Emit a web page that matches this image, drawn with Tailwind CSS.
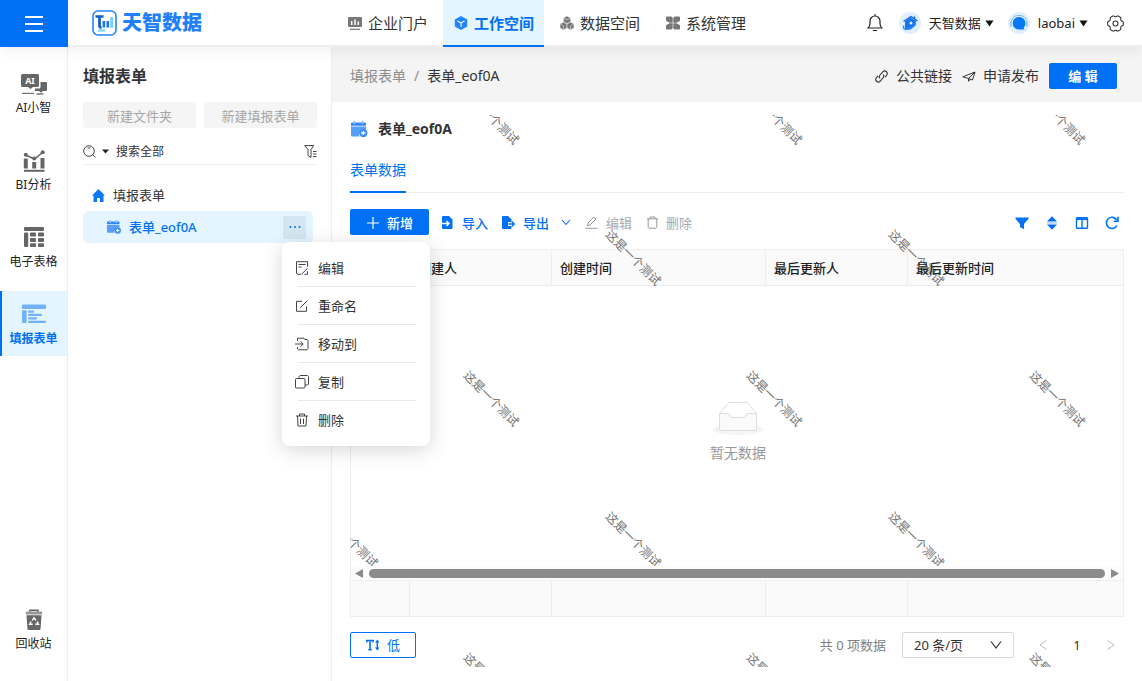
<!DOCTYPE html>
<html lang="zh-CN">

<head>
    <meta charset="UTF-8" />
    <meta name="viewport" content="width=device-width, initial-scale=1.0" />
    <title>天智数据 - 填报表单</title>
    <script src="https://cdn.jsdelivr.net/npm/@tailwindcss/browser@4"></script>
</head>

<body class="h-screen flex flex-col overflow-hidden bg-white text-[#333] text-[13px] leading-5 font-['Noto_Sans','Noto_Sans_CJK_SC',sans-serif]">

    <!-- 顶部导航 -->
    <header class="relative z-10 h-[47px] shrink-0 flex items-start bg-white border-b-2 border-[#eee] shadow-[0_5px_10px_rgba(0,0,0,0.05)]">
        <button type="button" aria-label="菜单" class="w-[68px] h-[47px] shrink-0 bg-[#0070f5] flex items-center justify-center">
            <svg class="w-[18px] h-4" viewBox="0 0 18 16" stroke="#fff" stroke-width="1.8"><path d="M0 1h18M0 8h18M0 15h18" /></svg>
        </button>
        <a href="#" class="w-[269px] h-[45px] pl-6 flex items-center gap-[5px]">
            <svg class="w-[25px] h-[26px]" viewBox="0 0 25 26" fill="none">
                <rect x="1" y="1" width="23" height="24" rx="5" stroke="#2684f8" stroke-width="1.6" />
                <path d="M3.500 6.500h8" stroke="#1764c8" stroke-width="2.600" />
                <path d="M7.500 6v9.500a2 2 0 0 0 2 2" stroke="#1764c8" stroke-width="2.800" />
                <path d="M11.900 11v6.500M15.800 11v6.500" stroke="#1a78ef" stroke-width="2.600" />
                <path d="M19.700 7v10.800" stroke="#6fd0fb" stroke-width="2.800" />
                <path d="M6 20.500h7" stroke="#6fd9f5" stroke-width="2.200" />
            </svg>
            <span class="text-xl leading-6 font-black text-[#1f80fa]">天智数据</span>
        </a>
        <nav class="flex gap-[5px] text-[15px] whitespace-nowrap">
            <a href="#" class="w-[101px] h-[45px] pl-[11px] flex items-center gap-1.5">
                <svg class="w-3.5 h-3.5" viewBox="0 0 14 14"><path d="M1 1h12a1 1 0 0 1 1 1v8a1 1 0 0 1-1 1H1a1 1 0 0 1-1-1V2a1 1 0 0 1 1-1z" fill="#777" /><path d="M3.700 5v4M7 3.500V9M10.300 5.500V9" stroke="#fff" stroke-width="1.500" /><path d="M2 13.300h10" stroke="#777" stroke-width="1.200" /></svg>
                企业门户
            </a>
            <a href="#" class="w-[101px] h-[47px] pl-[11px] flex items-center gap-1.5 bg-[#e4f5ff] text-[#0070f5] font-bold border-b-2 border-[#0070f5]">
                <svg class="w-3.5 h-3.5" viewBox="0 0 14 14"><path d="M7 0l6.200 3.400v7.200L7 14 .8 10.600V3.400z" fill="#2286f8" /><path d="M3.500 5L7 6.900 10.500 5M7 6.900v4" stroke="#fff" stroke-width="1.100" fill="none" /></svg>
                工作空间
            </a>
            <a href="#" class="w-[101px] h-[45px] pl-[11px] flex items-center gap-1.5">
                <svg class="w-3.5 h-3.5" viewBox="0 0 14 14" fill="#777" stroke="#fff" stroke-width=".5"><path d="M7 0l3.600 1.900v3.900L7 7.700 3.400 5.800V1.900z" /><path d="M3.500 6.100l3.500 1.900v3.900l-3.500 2L0 11.900V8z" /><path d="M10.500 6.100L14 8v3.900l-3.500 2L7 11.900V8z" /><path d="M3.600 2L7 3.800l3.500-1.700M3.500 9.900v3.700M.3 8.200l3.200 1.700M10.500 9.900v3.700M10.500 9.900l3.200-1.700" fill="none" /></svg>
                数据空间
            </a>
            <a href="#" class="w-[101px] h-[45px] pl-[11px] flex items-center gap-1.5">
                <svg class="w-3.5 h-3.5" viewBox="0 0 14 14" fill="#777"><path d="M1 .5h4A1.700 1.700 0 0 1 6.700 2.200v4.500H3.500L0 4.700V1.500a1 1 0 0 1 1-1z" /><path d="M13 .5H9A1.700 1.700 0 0 0 7.300 2.200v4.500h3.200L14 4.700V1.500a1 1 0 0 0-1-1z" /><path d="M1 13.500h4a1.700 1.700 0 0 0 1.700-1.700V7.300H3.500L0 9.300v3.200a1 1 0 0 0 1 1z" /><path d="M13 13.500H9a1.700 1.700 0 0 1-1.700-1.700V7.300h3.200l3.500 2v3.200a1 1 0 0 1-1 1z" /></svg>
                系统管理
            </a>
        </nav>
        <div class="ml-auto h-[46px] pr-[18px] flex items-center text-[#222] whitespace-nowrap">
            <button type="button" aria-label="通知" class="mr-4">
                <svg class="w-4 h-[18px]" viewBox="0 0 16 18" fill="none" stroke="#222" stroke-width="1.200"><path d="M8 .5v1.500M1 14h14c-1.500-1.300-2-2.500-2-4.500V7a5 5 0 0 0-10 0v2.500C3 11.500 2.500 12.700 1 14zM6.300 16.500h3.400" stroke-linejoin="round" stroke-linecap="round" /></svg>
            </button>
            <button type="button" class="flex items-center">
                <svg class="w-[22px] h-[22px] mr-2" viewBox="0 0 22 22"><circle cx="11" cy="11" r="11" fill="#e0efff" /><path d="M6 9.500l5.500-4 5.500 3.500-.5 4.500-5 4-5.500-.5z" fill="#1474f0" /><path d="M4.500 9.500l7.500-5 6.500 4.500M15.500 4.500V7" stroke="#0a62da" stroke-width="1.400" fill="none" /><circle cx="12" cy="11" r="1.500" fill="#e0efff" /><path d="M5 13.500c-2 3.500 1.500 4.800 6 3 3-1.200 4.500-3 5.500-4.500" stroke="#2e8bfb" stroke-width="1.400" fill="none" /></svg>
                天智数据
                <svg class="w-[9px] h-[7px] ml-1" viewBox="0 0 9 7"><path d="M.5.5h8L4.500 6.500z" fill="#111" /></svg>
            </button>
            <button type="button" class="ml-3.5 flex items-center">
                <svg class="w-[22px] h-[22px] mr-2" viewBox="0 0 22 22"><circle cx="11" cy="11" r="11" fill="#e0efff" /><path d="M11 5a6.300 6.300 0 1 0 0 12.600h5.500l-.8-2A6.300 6.300 0 0 0 11 5z" fill="#0878f5" /><path d="M3.500 9a7.800 7.800 0 0 1 15 0" fill="none" stroke="#7bb8fc" stroke-width="1" /><path d="M3 10v4M19 10v4" stroke="#8cc2fc" stroke-width="1.600" stroke-linecap="round" /></svg>
                laobai
                <svg class="w-[9px] h-[7px] ml-1" viewBox="0 0 9 7"><path d="M.5.5h8L4.500 6.500z" fill="#111" /></svg>
            </button>
            <button type="button" aria-label="设置" class="ml-[19px]">
                <svg class="w-[17px] h-[17px]" viewBox="0 0 17 17" fill="none" stroke="#333" stroke-width="1.100" stroke-linejoin="round"><path d="M5.700 1h1.200c.5 1 2.700 1 3.200 0h1.200l2.300 1.400.2 1c-.5 1.100.5 2.700 1.700 2.800l.8.900v2.800l-.8.900c-1.200.1-2.200 1.700-1.700 2.800l-.2 1L11.300 16h-1.200c-.5-1-2.700-1-3.200 0H5.700l-2.300-1.400-.2-1c.5-1.100-.5-2.700-1.700-2.800l-.8-.9V7.100l.8-.9c1.200-.1 2.200-1.700 1.700-2.800l.2-1z" /><circle cx="8.500" cy="8.500" r="2.500" /></svg>
            </button>
        </div>
    </header>

    <div class="flex-1 min-h-0 flex">

        <!-- 左侧主菜单 -->
        <aside class="w-[68px] shrink-0 pt-[13px] pb-5 flex flex-col gap-3 border-r border-[#eee] text-xs leading-5 text-[#222]">
            <a href="#" class="h-[65px] pt-3 flex flex-col items-center gap-0.5">
                <svg class="w-[26px] h-6" viewBox="0 0 26 24"><path d="M1.500 2h15A1.500 1.500 0 0 1 18 3.500v10a1.500 1.500 0 0 1-1.500 1.500H12l-2.500 2L7 15H1.500A1.500 1.500 0 0 1 0 13.500v-10A1.500 1.500 0 0 1 1.500 2z" fill="#666" /><path d="M19.500 10H25a1 1 0 0 1 1 1v7a1 1 0 0 1-1 1h-3l-2 1.800-2-1.800h-4v-2.500h4c1 0 1.500-.7 1.500-1.500z" fill="#666" /><path d="M1 21.300h12M15.500 22h7" stroke="#777" stroke-width="1.300" /><text x="9" y="12" text-anchor="middle" font-size="9" font-weight="700" fill="#fff">AI</text></svg>
                AI小智
            </a>
            <a href="#" class="h-[65px] pt-3 flex flex-col items-center gap-0.5">
                <svg class="w-[22px] h-6" viewBox="0 0 22 24"><path d="M1 21.800h20.500" stroke="#666" stroke-width="2" /><path d="M2.800 9.500v10M11.200 13v6.500M19.500 9v10.500" stroke="#666" stroke-width="4" /><path d="M2.500 6l9 4L20 3" stroke="#666" stroke-width="1.600" fill="none" /><circle cx="2.800" cy="5.800" r="2" fill="#666" /><circle cx="11.300" cy="9.500" r="2" fill="#666" /><circle cx="19.700" cy="3.300" r="2" fill="#666" /></svg>
                BI分析
            </a>
            <a href="#" class="h-[65px] pt-3 flex flex-col items-center gap-0.5">
                <svg class="w-5 h-6" viewBox="0 0 20 24" fill="#666"><rect y="1" width="20" height="4" rx="1" /><rect y="6.500" width="4.200" height="14.500" rx="1" /><rect x="6" y="6.500" width="6" height="4" rx=".8" /><rect x="14" y="6.500" width="6" height="4" rx=".8" /><rect x="6" y="12" width="6" height="4" rx=".8" /><rect x="14" y="12" width="6" height="4" rx=".8" /><rect x="6" y="17.300" width="6" height="3.700" rx=".8" /><rect x="14" y="17.300" width="6" height="3.700" rx=".8" /></svg>
                电子表格
            </a>
            <a href="#" class="h-[65px] pt-3 pr-0.5 flex flex-col items-center gap-0.5 bg-[#e4f5ff] border-l-2 border-[#0070f5] text-[#0070f5] font-bold">
                <svg class="w-6 h-6" viewBox="0 0 24 24" fill="#70b3fc"><rect y="1.500" width="24" height="4.500" rx="1" /><rect y="7.300" width="4.600" height="12.700" rx="1" /><rect x="6" y="7.500" width="6" height="2.200" rx="1" /><rect x="6" y="10.800" width="14" height="2.200" rx="1" /><rect x="6" y="14.300" width="9" height="2.200" rx="1" /><rect x="6" y="17.800" width="18" height="2.200" rx="1" /></svg>
                填报表单
            </a>
            <a href="#" class="h-[65px] pt-3 mt-auto flex flex-col items-center gap-0.5">
                <svg class="w-[18px] h-6" viewBox="0 0 18 24"><path d="M5 4V2.200h8V4" fill="none" stroke="#666" stroke-width="1.500" /><rect x=".8" y="3.500" width="16.400" height="3" rx="1" fill="#999" /><path d="M1.500 7.300h15l-1 14a1 1 0 0 1-1 .7h-11a1 1 0 0 1-1-.7z" fill="#666" /><path d="M7.300 12.300L9 9.800l1.800 2.500M12 13.600l1.400 2.600H10.400M7.700 16.200H4.700L6 13.600" fill="none" stroke="#fff" stroke-width="1.500" /></svg>
                回收站
            </a>
        </aside>

        <!-- 表单目录 -->
        <section class="relative w-[264px] shrink-0 pl-[15px] pr-3.5 border-r border-[#eee]">
            <h2 class="mt-[17px] text-base leading-6 font-bold">填报表单</h2>
            <div class="mt-3.5 flex gap-2 text-[#a6a6a6]">
                <button type="button" disabled class="flex-1 h-[26px] pt-0.5 bg-[#f5f5f5] rounded-xs">新建文件夹</button>
                <button type="button" disabled class="flex-1 h-[26px] pt-0.5 bg-[#f5f5f5] rounded-xs">新建填报表单</button>
            </div>
            <div class="mt-2.5 h-[27px] flex items-center border-b border-[#eee] text-xs">
                <svg class="w-[13px] h-[13px]" viewBox="0 0 13 13" fill="none" stroke="#444"><circle cx="6" cy="6" r="5.300" /><path d="M10 10l2.500 2.500M4.500 3h3" /></svg>
                <svg class="w-[7px] h-[5px] ml-1.5" viewBox="0 0 7 5"><path d="M0 .5h7L3.500 4.500z" fill="#222" /></svg>
                <input type="text" aria-label="搜索" placeholder="搜索全部" class="ml-[7px] pt-0.5 flex-1 min-w-0 outline-none placeholder:text-[#333]" />
                <button type="button" aria-label="筛选">
                    <svg class="w-[13px] h-[13px]" viewBox="0 0 13 13" fill="none" stroke="#444"><path d="M.6.6h9.200L7 4.500v8L4 10.500v-6zM9 6.500h3.500M9 9h3.500M9 11.500h3.500" /></svg>
                </button>
            </div>
            <ul class="mt-3.5">
                <li class="h-8 pl-[9px] flex items-center gap-2">
                    <svg class="w-[13px] h-[13px]" viewBox="0 0 13 13"><path d="M6.500 0L13 6.500h-1.500V13H8V9H5v4H1.500V6.500H0z" fill="#0a78f8" /></svg>
                    填报表单
                </li>
                <li class="h-8 mr-1 pl-6 pr-[7px] flex items-center rounded-md bg-[#e4f5ff] text-[#0070f5] font-medium">
                    <svg class="w-3.5 h-3.5 mr-2" viewBox="0 0 18 18"><path d="M0 6.500h16V10a5 5 0 0 0-6.500 6.500H1a1 1 0 0 1-1-1z" fill="#589ff9" /><path d="M1 2h14a1 1 0 0 1 1 1v2.500H0V3a1 1 0 0 1 1-1z" fill="#2f86f7" /><path d="M4 0v4M12 0v4" stroke="#8fc0fc" stroke-width="2" /><circle cx="13.700" cy="13.500" r="4.200" fill="#3d8ff8" /><path d="M13.700 11.400v4.200M11.600 13.500h4.200" stroke="#fff" stroke-width="1.400" /></svg>
                    表单_eof0A
                    <button type="button" aria-label="更多操作" class="ml-auto w-[23px] h-[23px] rounded-xs bg-[#d3e6f2] flex items-center justify-center">
                        <svg class="w-3 h-1" viewBox="0 0 12 4" fill="#0070f5"><circle cx="1.500" cy="2" r="1" /><circle cx="6" cy="2" r="1" /><circle cx="10.500" cy="2" r="1" /></svg>
                    </button>
                </li>
            </ul>

            <!-- 右键菜单 -->
            <div role="menu" class="absolute z-20 left-[214px] top-[195px] w-[148px] pt-[7px] pb-2 rounded-lg bg-white shadow-[0_4px_20px_rgba(0,0,0,0.16)]">
                <button type="button" role="menuitem" class="w-full h-[37px] pl-[13px] flex items-center gap-[9px]">
                    <svg class="w-3.5 h-3.5" viewBox="0 0 14 14" fill="none" stroke="#444"><path d="M6 13.300H2.500L1.500 12V.7h11v5M3.500 3.500h7M3.500 6h3M6.500 13.300l6-6M9.500 13.300h3v-3" /></svg>
                    编辑
                </button>
                <hr class="ml-4 mr-3.5 border-[#e9e9e9]" />
                <button type="button" role="menuitem" class="w-full h-[37px] pl-[13px] flex items-center gap-[9px]">
                    <svg class="w-3.5 h-3.5" viewBox="0 0 14 14" fill="none" stroke="#444"><path d="M7 2.300H1.500v10h10V7.500M5 9l7.500-7.500" /></svg>
                    重命名
                </button>
                <hr class="ml-4 mr-3.5 border-[#e9e9e9]" />
                <button type="button" role="menuitem" class="w-full h-[37px] pl-[13px] flex items-center gap-[9px]">
                    <svg class="w-3.5 h-3.5" viewBox="0 0 14 14" fill="none" stroke="#444"><path d="M2.500 4V1.200H9l.8 1.300h2.500L13 3.500v8l-1 1.300H3.500L2.500 12V10M0 7h8M5.700 4.500L8.200 7 5.700 9.500" /></svg>
                    移动到
                </button>
                <hr class="ml-4 mr-3.5 border-[#e9e9e9]" />
                <button type="button" role="menuitem" class="w-full h-[37px] pl-[13px] flex items-center gap-[9px]">
                    <svg class="w-3.5 h-3.5" viewBox="0 0 14 14" fill="none" stroke="#444"><rect x=".5" y="3.500" width="9.500" height="9.500" rx="1" /><path d="M4 3.500V1.500l1-1h7.500l1 1V9l-1 1H10" /></svg>
                    复制
                </button>
                <hr class="ml-4 mr-3.5 border-[#e9e9e9]" />
                <button type="button" role="menuitem" class="w-full h-[37px] pl-[13px] flex items-center gap-[9px]">
                    <svg class="w-3.5 h-3.5" viewBox="0 0 14 14" fill="none" stroke="#444"><path d="M1 3h12M4.500 3V1h5v2M2.500 3l.5 10h8l.5-10M5.500 5.500v5.500M8.500 5.500v5.500" /></svg>
                    删除
                </button>
            </div>
        </section>

        <!-- 主内容 -->
        <main class="flex-1 min-w-0 flex flex-col">
            <div class="h-[55px] shrink-0 pl-[18px] pr-[25px] pt-[3px] flex items-center bg-[#f4f4f4] text-sm whitespace-nowrap">
                <nav class="flex gap-2">
                    <a href="#" class="text-[#8c8c8c]">填报表单</a>
                    <span class="text-[#8c8c8c]">/</span>
                    <span>表单_eof0A</span>
                </nav>
                <div class="ml-auto flex items-center">
                    <button type="button" class="flex items-center gap-2">
                        <svg class="w-[13px] h-[13px]" viewBox="0 0 13 13" fill="none" stroke="#333" stroke-width="1.100"><path d="M5 8.300c-1-1-1-2.200 0-3.300L8 1.600C9.800-.2 13.500 2 11.800 5L10 7.200M8 4.700c1 1 1 2.200 0 3.300l-3 3.400C3.200 13.200-.5 11 1.200 8L3 5.800" /></svg>
                        公共链接
                    </button>
                    <button type="button" class="ml-2.5 flex items-center gap-[7px]">
                        <svg class="w-3.5 h-3.5" viewBox="0 0 14 14" fill="none" stroke="#333"><path d="M.8 7.800L13 3l-2.500 8-4-1.500zM6.500 9.500L13 3M6.500 9.500v2.800l1.800-2" stroke-linejoin="round" /></svg>
                        申请发布
                    </button>
                    <button type="button" class="ml-2.5 w-[68px] h-[26px] rounded-xs bg-[#0070f5] text-white text-[13px] font-bold">编 辑</button>
                </div>
            </div>

            <div class="relative flex-1 min-h-0 mx-[18px] mt-[13px] mb-3.5 flex flex-col">
                <div class="h-7 flex items-center gap-2.5 text-sm font-bold">
                    <svg class="w-[18px] h-[18px]" viewBox="0 0 18 18"><path d="M1 6.500h15V10a5 5 0 0 0-6.500 6.500H2a1 1 0 0 1-1-1z" fill="#589ff9" /><path d="M2 2.500h13a1 1 0 0 1 1 1v2.300H1V3.500a1 1 0 0 1 1-1z" fill="#2f86f7" /><path d="M4.500.8v3.500M12.500.8v3.500" stroke="#8fc0fc" stroke-width="1.800" /><circle cx="13.300" cy="13" r="4.200" fill="#3d8ff8" /><path d="M13.300 10.900v4.200M11.200 13h4.200" stroke="#fff" stroke-width="1.300" /></svg>
                    表单_eof0A
                </div>

                <div role="tablist" class="mt-[17px] h-[33px] flex items-start border-b border-[#eee] text-sm">
                    <button type="button" role="tab" aria-selected="true" class="h-[33px] pb-3 border-b-2 border-[#0070f5] text-[#0070f5]">表单数据</button>
                </div>

                <!-- 工具栏 -->
                <div class="mt-4 h-[27px] flex items-center text-[#0070f5] whitespace-nowrap">
                    <button type="button" class="w-[79px] h-[26px] mb-px pt-px pl-[17px] flex items-center gap-2 rounded-xs bg-[#0070f5] text-white font-medium">
                        <svg class="w-3 h-3" viewBox="0 0 12 12" stroke="#fff" stroke-width="1.200"><path d="M6 0v12M0 6h12" /></svg>
                        新增
                    </button>
                    <button type="button" class="ml-3 flex items-center gap-2 font-medium">
                        <svg class="w-[13px] h-[13px]" viewBox="0 0 13 13"><path d="M2 0h6l3.500 3.500V12a1 1 0 0 1-1 1H2a1 1 0 0 1-1-1V1a1 1 0 0 1 1-1z" fill="#0070f5" /><path d="M0 7.500h7.500M5.500 5l2.500 2.500L5.500 10" stroke="#fff" stroke-width="1.400" fill="none" /></svg>
                        导入
                    </button>
                    <button type="button" class="ml-3.5 flex items-center gap-2 font-medium">
                        <svg class="w-[13px] h-[13px]" viewBox="0 0 13 13"><path d="M1 0h5l3.500 3.500V6H6v4h3.500v2a1 1 0 0 1-1 1H1a1 1 0 0 1-1-1V1a1 1 0 0 1 1-1z" fill="#0070f5" /><path d="M6.500 8H12M9.800 5.500L12.300 8l-2.500 2.500" stroke="#0070f5" stroke-width="1.300" fill="none" /></svg>
                        导出
                        <svg class="w-2.5 h-2.5 ml-1" viewBox="0 0 10 10" fill="none" stroke="#0070f5" stroke-width="1.100"><path d="M1 2l4 4.500L9 2" /></svg>
                    </button>
                    <button type="button" disabled class="ml-3.5 flex items-center gap-2 text-[#aaa]">
                        <svg class="w-[13px] h-[13px]" viewBox="0 0 13 13" fill="none" stroke="#999"><path d="M2.500 9.800l.5-2.800 6-6 2 2-6 6zM.5 12.300h12" /></svg>
                        编辑
                    </button>
                    <button type="button" disabled class="ml-3.5 flex items-center gap-[7px] text-[#aaa]">
                        <svg class="w-[13px] h-[13px]" viewBox="0 0 13 13" fill="none" stroke="#999"><path d="M1 2.800h11M4 2.800V1h5v1.800M2.200 2.800v8.500l.8.900h7l.8-.9V2.800" /></svg>
                        删除
                    </button>
                    <div class="ml-auto mr-[5px] pt-px flex gap-4">
                        <button type="button" aria-label="筛选"><svg class="w-3.5 h-3.5" viewBox="0 0 14 14" fill="#0070f5"><path d="M.5 1.500h13v1.300L9 8v5.300L5 11V8L.5 2.800z" /></svg></button>
                        <button type="button" aria-label="排序"><svg class="w-3.5 h-3.5" viewBox="0 0 14 14" fill="#0070f5"><path d="M7 .3L12 5.500H2zM7 13.700L2 8.500h10z" /><path d="M2 6.300h10v1.400H2z" opacity=".35" /></svg></button>
                        <button type="button" aria-label="列设置"><svg class="w-3.5 h-3.5" viewBox="0 0 14 14" fill="none" stroke="#0070f5" stroke-width="1.400"><rect x="1.500" y="1.700" width="11" height="10.600" rx=".8" /><path d="M1.500 3h11" stroke-width="2.200" /><path d="M7 3v9" /></svg></button>
                        <button type="button" aria-label="刷新"><svg class="w-3.5 h-3.5" viewBox="0 0 14 14" fill="none" stroke="#0070f5" stroke-width="1.600"><path d="M12 9.500A5.600 5.600 0 1 1 11.800 4" /><path d="M13 .8v4.400H8.700" /></svg></button>
                    </div>
                </div>

                <!-- 数据表格 -->
                <div class="mt-[13px] flex-1 min-h-0">
                    <table class="w-full h-full table-fixed border-separate border-spacing-0 border-t border-l border-[#eee] text-left">
                        <colgroup>
                            <col class="w-[59px]" />
                            <col class="w-[142px]" />
                            <col class="w-[214px]" />
                            <col class="w-[142px]" />
                            <col />
                        </colgroup>
                        <thead>
                            <tr class="h-9 bg-[#fafafa] text-[#222]">
                                <th class="border-r border-b border-[#eee]"></th>
                                <th class="px-2 border-r border-b border-[#eee] font-medium"><span class="relative z-[2]">创建人</span></th>
                                <th class="px-2 border-r border-b border-[#eee] font-medium"><span class="relative z-[2]">创建时间</span></th>
                                <th class="px-2 border-r border-b border-[#eee] font-medium"><span class="relative z-[2]">最后更新人</span></th>
                                <th class="px-2 border-r border-b border-[#eee] font-medium"><span class="relative z-[2]">最后更新时间</span></th>
                            </tr>
                        </thead>
                        <tbody>
                            <tr>
                                <td colspan="5" class="pt-3 pl-0.5 border-r border-[#eee] text-sm text-[#999]">
                                    <div class="flex flex-col items-center gap-2">
                                        <svg class="w-[52px] h-[33px]" viewBox="0 0 52 33"><ellipse cx="26" cy="27.500" rx="25.500" ry="5.300" fill="#f5f5f5" /><path d="M7.500 11.500L16 1.500q.7-1 2-1h16q1.300 0 2 1l8.500 10" fill="#fff" stroke="#dedede" /><path d="M7.500 11.500H16q2 0 2 2t2 2h12q2 0 2-2t2-2h8.500V27q0 1.500-1.500 1.500H9Q7.500 28.500 7.500 27z" fill="#fafafa" stroke="#dedede" /></svg>
                                        暂无数据
                                    </div>
                                </td>
                            </tr>
                            <tr class="h-3.5">
                                <td colspan="5" class="p-0 border-r border-[#eee]">
                                    <!-- 横向滚动条 -->
                                    <div class="relative z-[2] h-3.5 px-1 flex items-center gap-1.5 bg-[#fcfcfc]">
                                        <svg class="w-2 h-[9px]" viewBox="0 0 8 9" fill="#8b8b8b"><path d="M8 0v9L0 4.500z" /></svg>
                                        <div class="flex-1 h-[9px] rounded-full bg-[#8b8b8b]"></div>
                                        <svg class="w-2 h-[9px]" viewBox="0 0 8 9" fill="#8b8b8b"><path d="M0 0v9l8-4.500z" /></svg>
                                    </div>
                                </td>
                            </tr>
                        </tbody>
                        <tfoot>
                            <tr class="h-[37px] bg-[#fafafa]">
                                <td class="border-t border-r border-b border-[#eee]"></td>
                                <td class="border-t border-r border-b border-[#eee]"></td>
                                <td class="border-t border-r border-b border-[#eee]"></td>
                                <td class="border-t border-r border-b border-[#eee]"></td>
                                <td class="border-t border-r border-b border-[#eee]"></td>
                            </tr>
                        </tfoot>
                    </table>
                </div>

                <!-- 分页 -->
                <div class="mt-[15px] mb-[9px] h-[26px] flex items-center">
                    <button type="button" class="w-[66px] h-[26px] flex items-center justify-center gap-[7px] rounded-xs border border-[#0070f5] text-[#0070f5]">
                        <svg class="w-3.5 h-3" viewBox="0 0 14 12" fill="none" stroke="#0070f5"><path d="M0 1.500h8M1 1v2.500M7 1v2.500" stroke-width="1.400" /><path d="M4 1v10M2.300 10.800h3.500" stroke-width="1.600" /><path d="M11.300 2v8" stroke-width="1.500" /><path d="M11.300.5L13.500 3.500H9zM11.300 11.500L9 8.500h4.500z" fill="#0070f5" stroke="none" /></svg>
                        低
                    </button>
                    <span class="ml-auto mr-4 text-[#808080]">共 0 项数据</span>
                    <label class="relative w-28 h-[26px]">
                        <select aria-label="每页条数" class="w-full h-full pl-[11px] appearance-none rounded-xs border border-[#d9d9d9] bg-white outline-none">
                            <option>20 条/页</option>
                        </select>
                        <svg class="absolute right-3 top-2 w-3 h-2.5" viewBox="0 0 12 10" fill="none" stroke="#333" stroke-width="1.200"><path d="M1 1.500l5 6.500 5-6.500" /></svg>
                    </label>
                    <div class="ml-6 mr-2 flex items-center">
                        <button type="button" aria-label="上一页" class="w-2.5 h-3.5"><svg class="w-2.5 h-3.5" viewBox="0 0 10 14" fill="none" stroke="#bbb"><path d="M8.500 2.500L2 7l6.500 4.500" /></svg></button>
                        <button type="button" class="w-[58px]">1</button>
                        <button type="button" aria-label="下一页" class="w-2.5 h-3.5"><svg class="w-2.5 h-3.5" viewBox="0 0 10 14" fill="none" stroke="#bbb"><path d="M1.500 2.500L8 7l-6.500 4.500" /></svg></button>
                    </div>
                </div>

                <!-- 水印 -->
                <div id="watermark" class="absolute inset-0 z-[1] overflow-hidden pointer-events-none"></div>
            </div>
        </main>
    </div>

    <script>
        const layer = document.getElementById("watermark");

        // 交错平铺水印，超出内容区的部分被裁掉
        function drawWatermark() {
            layer.innerHTML = "";
            const width = window.innerWidth - 332;
            const height = window.innerHeight - 102;
            const stepX = 283;
            const stepY = 141;
            for (let row = 0; row * stepY < height; row++) {
                const start = row % 2 ? 0 : 141;
                for (let x = start; x < width; x += stepX) {
                    const mark = document.createElement("span");
                    mark.className = "absolute w-[72px] h-4 -ml-9 -mt-2 text-xs leading-4 text-[#707070] whitespace-nowrap rotate-45";
                    mark.style.left = x + "px";
                    mark.style.top = row * stepY + 2 + "px";
                    mark.textContent = "这是一个测试";
                    layer.appendChild(mark);
                }
            }
        }

        drawWatermark();
        window.addEventListener("resize", drawWatermark);
    </script>
</body>

</html>
